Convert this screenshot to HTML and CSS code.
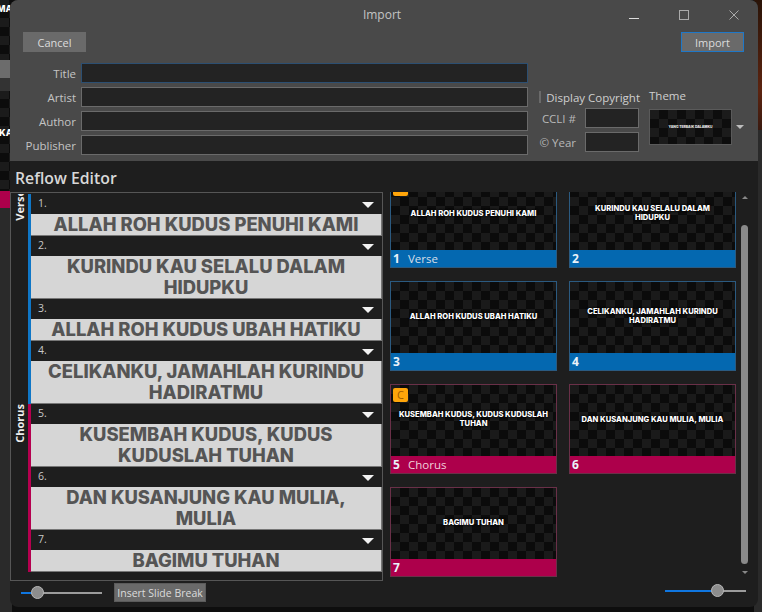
FILE: index.html
```html
<!DOCTYPE html>
<html lang="en">
<head>
<meta charset="utf-8">
<title>Import</title>
<link rel="stylesheet" href="styles.css">
</head>
<body>
<div class="desk">
  <div class="strip strip-left">
    <span class="peek peek-ma">MA</span>
    <span class="peek peek-ka">KA</span>
    <span class="peek peek-ah">ah</span>
    <div class="sl-gray"></div>
    <div class="sl-dark"></div>
    <div class="sl-red"></div>
    <div class="sl-line"></div>
  </div>
  <div class="strip strip-right">
    <div class="sr-fire"></div>
    <div class="sr-panel"></div>
  </div>

  <main class="window">
    <section class="top">
      <header class="titlebar">
        <span class="wintitle">Import</span>
        <div class="winctl">
          <svg width="10" height="10" viewBox="0 0 10 10"><path d="M0 8.5h10" stroke="#ddd" fill="none"/></svg>
          <svg width="10" height="10" viewBox="0 0 10 10"><rect x=".5" y=".5" width="9" height="9" stroke="#aaa" fill="none"/></svg>
          <svg width="10" height="10" viewBox="0 0 10 10"><path d="M.5.5l9 9M9.5.5l-9 9" stroke="#aaa" fill="none"/></svg>
        </div>
      </header>
      <div class="actions">
        <button class="btn">Cancel</button>
        <button class="btn btn-primary">Import</button>
      </div>
      <div class="meta">
        <div class="fields">
          <label class="field"><span>Title</span><i class="input input-focus"></i></label>
          <label class="field"><span>Artist</span><i class="input"></i></label>
          <label class="field"><span>Author</span><i class="input"></i></label>
          <label class="field"><span>Publisher</span><i class="input"></i></label>
        </div>
        <div class="extras">
          <div class="copy-col">
            <label class="check"><i class="box"></i>Display Copyright</label>
            <label class="small"><span>CCLI #</span><i class="input"></i></label>
            <label class="small"><span>© Year</span><i class="input"></i></label>
          </div>
          <div class="theme-col">
            <span class="theme-label">Theme</span>
            <div class="theme-row">
              <div class="theme-thumb"><span>YANG TERBAIK DALAMKU</span></div>
              <i class="caret caret-small"></i>
            </div>
          </div>
        </div>
      </div>
    </section>

    <section class="reflow">
      <h1 class="heading">Reflow Editor</h1>
      <div class="panes">
        <div class="left-pane">
          <div class="listbox">
            <div class="group group-verse">
              <div class="tag"><span>Verse</span></div>
              <div class="rows">
                <div class="row"><div class="row-head">1.<i class="caret"></i></div><div class="row-text">ALLAH ROH KUDUS PENUHI KAMI</div></div>
                <div class="row"><div class="row-head">2.<i class="caret"></i></div><div class="row-text">KURINDU KAU SELALU DALAM<br>HIDUPKU</div></div>
                <div class="row"><div class="row-head">3.<i class="caret"></i></div><div class="row-text">ALLAH ROH KUDUS UBAH HATIKU</div></div>
                <div class="row"><div class="row-head">4.<i class="caret"></i></div><div class="row-text">CELIKANKU, JAMAHLAH KURINDU<br>HADIRATMU</div></div>
              </div>
            </div>
            <div class="group group-chorus">
              <div class="tag"><span>Chorus</span></div>
              <div class="rows">
                <div class="row"><div class="row-head">5.<i class="caret"></i></div><div class="row-text">KUSEMBAH KUDUS, KUDUS<br>KUDUSLAH TUHAN</div></div>
                <div class="row"><div class="row-head">6.<i class="caret"></i></div><div class="row-text">DAN KUSANJUNG KAU MULIA,<br>MULIA</div></div>
                <div class="row"><div class="row-head">7.<i class="caret"></i></div><div class="row-text">BAGIMU TUHAN</div></div>
              </div>
            </div>
          </div>
          <div class="left-foot">
            <div class="slider slider-left"><b></b><u></u></div>
            <button class="btn btn-break">Insert Slide Break</button>
          </div>
        </div>

        <div class="right-pane">
          <div class="thumbs-wrap">
            <div class="thumbs">
              <div class="thumbs-grid">
                <article class="card verse"><em class="badge"></em><div class="slide"><p>ALLAH ROH KUDUS PENUHI KAMI</p></div><div class="bar"><b>1</b>Verse</div></article>
                <article class="card verse"><div class="slide"><p>KURINDU KAU SELALU DALAM<br>HIDUPKU</p></div><div class="bar"><b>2</b></div></article>
                <article class="card verse"><div class="slide"><p>ALLAH ROH KUDUS UBAH HATIKU</p></div><div class="bar"><b>3</b></div></article>
                <article class="card verse"><div class="slide"><p>CELIKANKU, JAMAHLAH KURINDU<br>HADIRATMU</p></div><div class="bar"><b>4</b></div></article>
                <article class="card chorus"><em class="badge">C</em><div class="slide"><p>KUSEMBAH KUDUS, KUDUS KUDUSLAH<br>TUHAN</p></div><div class="bar"><b>5</b>Chorus</div></article>
                <article class="card chorus"><div class="slide"><p>DAN KUSANJUNG KAU MULIA, MULIA</p></div><div class="bar"><b>6</b></div></article>
                <article class="card chorus"><div class="slide"><p>BAGIMU TUHAN</p></div><div class="bar"><b>7</b></div></article>
              </div>
            </div>
            <div class="scrollbar">
              <i class="sb-up"></i>
              <div class="sb-thumb"></div>
              <i class="sb-down"></i>
            </div>
          </div>
          <div class="right-foot">
            <div class="slider slider-right"><b></b><u></u></div>
          </div>
        </div>
      </div>
    </section>
  </main>
</div>
</body>
</html>
```

FILE: styles.css
```css
* { box-sizing: border-box; }
html, body { margin: 0; height: 100%; }
body { background: #0e0e0e; font-family: "Open Sans", "Noto Sans", sans-serif; font-size: 11.5px; color: #cfcfcf; overflow: hidden; }
i, em { font-style: normal; display: block; }

.desk { position: relative; width: 762px; height: 612px; overflow: hidden; }
.strip { position: absolute; top: 0; bottom: 0; overflow: hidden; }
.strip-left { left: 0; width: 12px;
  background: repeating-conic-gradient(#0c0c0c 0 25%, #1b1b1b 0 50%) 0 0 / 18px 18px; }
.strip-right { right: 0; width: 8px; background: #1d1d1d; }
.peek { position: absolute; left: -3px; color: #fff; font: 800 9px Inter, sans-serif; }
.peek-ma { top: 3px; }
.peek-ka { top: 127px; left: -1px; }
.peek-ah { top: 454px; left: 0; font: 400 11px "Open Sans", sans-serif; color: #ccc; }
.sl-gray { position: absolute; top: 60px; left: 0; width: 12px; height: 18px; background: #6c6c6c; }
.sl-dark { position: absolute; top: 78px; left: 0; width: 12px; height: 13px; background: #333; }
.sl-red { position: absolute; top: 191px; left: 0; width: 12px; height: 17px; background: #ad004b; }
.sl-line { position: absolute; top: 208px; left: 0; width: 12px; height: 404px; background: #2a2a2a; }
.sr-fire { height: 130px; background: linear-gradient(#2a1408, #5c2410 70%, #3a1a10); }
.sr-panel { height: 482px; background: #2a2a2a; }

.window { position: absolute; left: 10px; top: 0; width: 748px; height: 607px; border-radius: 8px; overflow: hidden; display: flex; flex-direction: column; background: #1e1e1e; }

.top { height: 161px; background: #494949; padding: 0 14px 0 13px; }
.titlebar { height: 32px; position: relative; display: flex; align-items: center; justify-content: center; }
.wintitle { font-size: 12px; color: #c4c4c4; margin-left: -3px; margin-top: -3px; }
.winctl { position: absolute; right: 5px; top: 10px; display: flex; gap: 40px; }
.actions { display: flex; justify-content: space-between; height: 20px; padding-right: 0; }
.btn { width: 63px; height: 20px; padding: 0; border: 0; background: #6a6a6a; color: #dcdcdc; font: 11px "Open Sans", sans-serif; }
.btn-primary { border: 1px solid #1f78c8; }

.meta { display: flex; margin-top: 11px; }
.fields { width: 506px; display: flex; flex-direction: column; gap: 4px; }
.field { display: flex; align-items: center; gap: 5px; height: 20px; }
.field span { width: 53px; text-align: right; color: #c4c4c4; }
.input { background: #232323; border: 1px solid #6a6a6a; height: 20px; }
.field .input { flex: 1; }
.input-focus { border-color: #2c4f72; }

.extras { display: flex; margin-left: 11px; }
.copy-col { width: 101px; padding-top: 23px; display: flex; flex-direction: column; }
.check { display: flex; align-items: center; height: 22px; margin-top: 0; color: #cfcfcf; white-space: nowrap; }
.box { width: 12px; height: 12px; background: #222; border: 1px solid #6a6a6a; margin-right: 5px; }
.small { display: flex; align-items: center; height: 20px; margin-bottom: 4px; margin-top: 0; }
.small span { width: 47px; text-align: right; padding-right: 0; color: #b8b8b8; margin-right: 0; flex: none; padding-right: 9px; margin-left: -1px; }
.small .input { width: 54px; flex: none; }
.theme-col { margin-left: 9px; padding-top: 23px; }
.theme-label { display: block; height: 21px; line-height: 20px; color: #cfcfcf; }
.theme-row { display: flex; align-items: center; gap: 4px; margin-top: 2px; }
.theme-thumb { width: 83px; height: 36px; border: 1px solid #5a5a5a; display: flex; align-items: center; justify-content: center;
  background: repeating-conic-gradient(#0d0d0d 0 25%, #1b1b1b 0 50%) 0 0 / 18px 18px; }
.theme-thumb span { font: 800 3.4px Inter, sans-serif; color: #eee; white-space: nowrap; }
.caret { width: 0; height: 0; border: 6.5px solid transparent; border-top: 6px solid #f2f2f2; border-bottom: 0; }
.caret-small { border-width: 4px 4px 0; border-top-color: #bdbdbd; }

.reflow { flex: 1; display: flex; flex-direction: column; min-height: 0; }
.heading { margin: 0; height: 31px; padding: 6px 0 0 5px; font: 600 15.8px/22px "Open Sans", sans-serif; color: #d8d8d8; }
.panes { display: flex; flex: 1; min-height: 0; }
.left-pane { width: 373px; display: flex; flex-direction: column; }
.listbox { height: 389px; border: 1px solid #565656; border-left-color: #565656; background: #1e1e1e; overflow: hidden; padding-top: 1px; }
.group { display: flex; }
.tag { width: 17px; flex: none; color: #eee; font-weight: 700; font-size: 11px; overflow: hidden; position: relative; }
.tag span { position: absolute; left: 1px; top: 0; writing-mode: vertical-rl; transform: rotate(180deg); line-height: 15px; }
.group-verse .tag span { top: -4px; }
.group-chorus .tag span { top: 0; }
.rows { flex: 1; border-left: 3px solid; }
.group-verse .rows { border-color: #0f76c6; }
.group-chorus .rows { border-color: #b5004f; }
.row-head { height: 20px; padding: 2px 8px 0 7px; line-height: 15px; font-size: 10.5px; color: #c8c8c8; display: flex; justify-content: space-between; align-items: flex-start; }
.row-head .caret { margin-top: 6px; }
.row-text { background: #d6d6d6; color: #555; text-align: center; font: 800 18.4px/21px Inter, sans-serif; border-bottom: 1px solid #777; border-right: 1px solid #777; white-space: nowrap; }

.left-foot { flex: 1; display: flex; align-items: center; padding: 0 0 3px 11px; gap: 12px; }
.btn-break { width: 92px; height: 19px; font-size: 10.5px; border: 1px solid #5b5b5b; }
.slider { position: relative; width: 81px; height: 2px; background: #9c9c9c; }
.slider b { position: absolute; left: 0; top: 0; height: 2px; background: #0f76e0; }
.slider u { position: absolute; top: -6px; width: 13px; height: 13px; border-radius: 50%; background: #8d8d8d; border: 1px solid #b8b8b8; }
.slider-left b { width: 16px; }
.slider-left u { left: 10px; }
.slider-right b { width: 52px; }
.slider-right u { left: 46px; }

.right-pane { flex: 1; display: flex; flex-direction: column; min-width: 0; }
.thumbs-wrap { height: 386px; display: flex; }
.thumbs { width: 358px; overflow: hidden; padding-left: 7px; }
.thumbs-grid { margin-top: -14px; display: grid; grid-template-columns: 167px 167px; column-gap: 12px; row-gap: 13px; }
.card { position: relative; height: 90px; border: 1px solid; display: flex; flex-direction: column; }
.card.verse { border-color: #2b5a80; }
.card.chorus { border-color: #6a3048; }
.slide { flex: 1; display: flex; align-items: center; justify-content: center; padding-bottom: 3px;
  background: repeating-conic-gradient(#0b0b0b 0 25%, #1a1a1a 0 50%) 0 0 / 18px 18px; }
.slide p { margin: 0; text-align: center; color: #fff; font: 800 7.6px/9px Inter, sans-serif; text-shadow: 0 0 2px #000, 0 0 2px #000; white-space: nowrap; }
.bar { height: 17px; display: flex; align-items: center; color: #d7dfe8; font-size: 11.5px; padding-left: 2px; }
.bar b { width: 15px; font: 700 12px "Open Sans", sans-serif; color: #eaf2fa; }
.verse .bar { background: #0468b0; }
.chorus .bar { background: #ad004b; }
.chorus .bar { color: #f0d0dc; }
.badge { position: absolute; left: 2px; top: 3px; width: 15px; height: 14px; border-radius: 2px; background: #ffa50a; color: #a25c00; font-size: 11px; line-height: 14px; text-align: center; }

.scrollbar { width: 8px; margin-left: 0; position: relative; }
.sb-up, .sb-down { position: absolute; left: 1px; width: 0; height: 0; border: 3px solid transparent; }
.sb-up { top: 4px; border-top: 0; border-bottom: 3px solid #888; }
.sb-down { top: 379px; border-bottom: 0; border-top: 3px solid #888; }
.sb-thumb { position: absolute; top: 33px; left: 0; width: 7px; height: 339px; border-radius: 4px; background: #8a8a8a; }

.right-foot { flex: 1; display: flex; align-items: center; justify-content: flex-end; padding: 0 12px 3px 0; }
```
